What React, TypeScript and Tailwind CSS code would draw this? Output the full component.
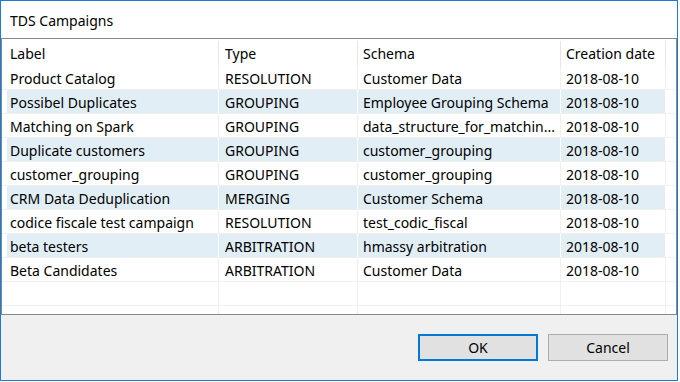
const rows = [
  ["Product Catalog", "RESOLUTION", "Customer Data", "2018-08-10"],
  ["Possibel Duplicates", "GROUPING", "Employee Grouping Schema", "2018-08-10"],
  ["Matching on Spark", "GROUPING", "data_structure_for_matchin...", "2018-08-10"],
  ["Duplicate customers", "GROUPING", "customer_grouping", "2018-08-10"],
  ["customer_grouping", "GROUPING", "customer_grouping", "2018-08-10"],
  ["CRM Data Deduplication", "MERGING", "Customer Schema", "2018-08-10"],
  ["codice fiscale test campaign", "RESOLUTION", "test_codic_fiscal", "2018-08-10"],
  ["beta testers", "ARBITRATION", "hmassy arbitration", "2018-08-10"],
  ["Beta Candidates", "ARBITRATION", "Customer Data", "2018-08-10"],
]

function Row({ cells, alt, height }: { cells: string[]; alt?: boolean; height: string }) {
  const bg = alt ? "bg-[#e1eef6]" : ""
  const sep = alt ? "border-white" : "border-[#f0f0f0]"
  return (
    <div className={`flex ${height} shrink-0 border-b border-[#f0f0f0]`}>
      <div className="w-[5px] shrink-0" />
      <div className={`w-[212px] shrink-0 pl-[3px] pt-[2px] flex items-center border-r ${sep} ${bg}`}>{cells[0]}</div>
      <div className={`w-[139px] shrink-0 pl-[6px] pt-[2px] flex items-center border-r ${sep} ${bg}`}>{cells[1]}</div>
      <div className={`w-[203px] shrink-0 pl-[5px] pt-[2px] flex items-center border-r ${sep} ${bg} whitespace-nowrap overflow-hidden`}>{cells[2]}</div>
      <div className={`w-[105px] shrink-0 pl-[5px] pt-[2px] flex items-center border-r ${sep} ${bg}`}>{cells[3]}</div>
      <div className="flex-1" />
    </div>
  )
}

export default function App() {
  return (
    <div className="w-[680px] h-[382px] bg-white font-['Noto_Sans',sans-serif] text-[14px] text-black">
      <div className="w-[678px] h-[381px] border border-[#1a7dd4] flex flex-col">
        <div className="h-[37px] shrink-0 flex items-center pl-[9px] pt-[2px]">TDS Campaigns</div>

        <div className="h-[277px] shrink-0 border border-[#828790] flex flex-col overflow-hidden">
          <div className="flex h-[27px] shrink-0 pt-[2px]">
            <div className="w-[5px] shrink-0" />
            <div className="w-[212px] shrink-0 pl-[3px] flex items-center border-r border-[#e5e5e5]">Label</div>
            <div className="w-[139px] shrink-0 pl-[6px] flex items-center border-r border-[#e5e5e5]">Type</div>
            <div className="w-[203px] shrink-0 pl-[5px] flex items-center border-r border-[#e5e5e5]">Schema</div>
            <div className="w-[105px] shrink-0 pl-[5px] flex items-center border-r border-[#e5e5e5]">Creation date</div>
            <div className="flex-1" />
          </div>
          {rows.map((r, i) => (
            <Row key={i} cells={r} alt={i % 2 === 1} height="h-[24px]" />
          ))}
          <Row cells={["", "", "", ""]} height="h-[24px]" />
          <Row cells={["", "", "", ""]} height="h-[24px]" />
        </div>

        <div className="flex-1 bg-[#f0f0f0] flex justify-end items-start pt-[19px] pr-[9px] gap-[10px]">
          <button className="w-[120px] h-[27px] border-2 border-[#0078d7] bg-[#e1e1e1] flex items-center justify-center">OK</button>
          <button className="w-[120px] h-[27px] border border-[#adadad] bg-[#e1e1e1] flex items-center justify-center">Cancel</button>
        </div>
      </div>
    </div>
  )
}
